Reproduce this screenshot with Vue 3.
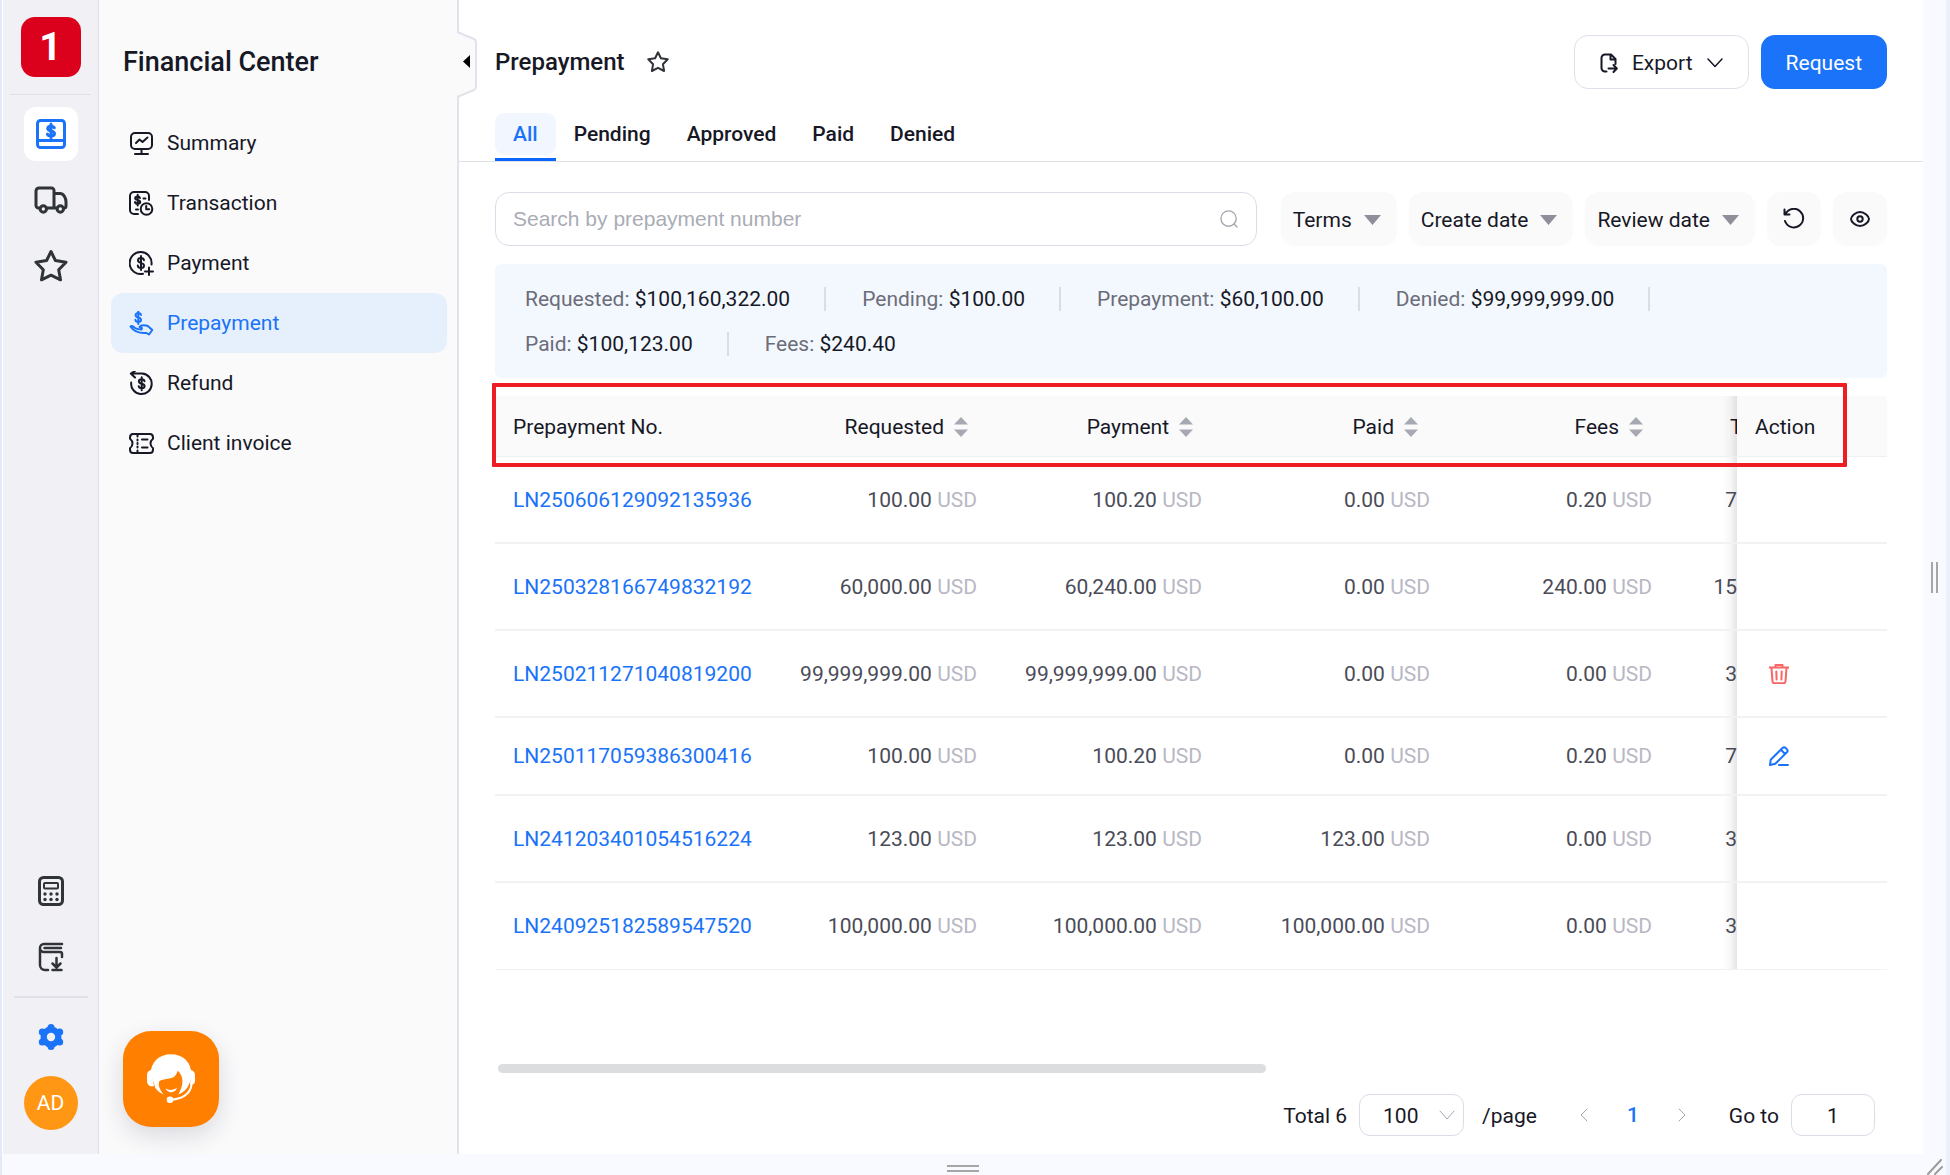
<script setup>
import { ref } from 'vue'

const search = ref('')
const pageSize = ref('100')
const pageInput = ref('1')

const dollar = 'M15 9.2c-.3-1.5-1.500-2.200-3-2.200s-3 .8-3 2.400c0 3.200 6 1.800 6 5.100 0 1.600-1.400 2.500-3 2.500s-3-.8-3.200-2.400M12 5v14'

const menu = [
  {
    label: 'Summary',
    icon: '<rect x="2" y="2" width="21" height="16" rx="4"/><path d="M7 12l3.500-3.500 3 2.500 5-4.500M12.500 18v4M6 23h13"/>'
  },
  {
    label: 'Transaction',
    icon: '<path d="M20 9V5a4 4 0 0 0-4-4H5a4 4 0 0 0-4 4v14a4 4 0 0 0 4 4h4M14.500 7.500h2M7 18.500h2"/><path d="M11 7c-.3-1-1-1.500-2.300-1.500S6.200 6 6.200 7.200c0 2.500 5 1.200 5 3.800 0 1.200-1.200 1.800-2.500 1.800S6.200 12 6 11M8.700 3.800v10.700"/><circle cx="17.500" cy="18" r="5.800"/><path d="M17.200 15v3.300h3"/>'
  },
  {
    label: 'Payment',
    icon: `<path d="M22.500 13.500A11 11 0 1 0 14 22.800M20 16.500v7.500M16 20.500h8"/><path d="${dollar}"/>`
  },
  {
    label: 'Prepayment',
    active: true,
    icon: '<path d="M12 4c-.3-1.300-1.300-1.900-2.700-1.900S6.600 2.800 6.600 4.200c0 2.900 5.400 1.600 5.400 4.500 0 1.400-1.300 2.200-2.700 2.200S6.600 10.200 6.400 8.800M9.300 0v13"/><path d="M1.500 15.500c1.500-1.300 3 0 4.500 1.500 2 1.500 4 1.600 6.500 1.600M12 18.500c2-1.200.5-2.500-1.500-2.500 1-1.800 4-2 8-1.200l4.800 4.200-3.300 4.500-2.500-1.500c-6 .5-12-.5-16-6.500"/>'
  },
  {
    label: 'Refund',
    icon: `<path d="M2 2.500h11a10.300 10.300 0 1 1-10.800 9M6 0L1.800 2.500 6 6.500"/><path d="M15.500 10.200c-.3-1.400-1.400-2-2.800-2s-2.800.7-2.800 2.200c0 3 5.700 1.700 5.700 4.700 0 1.500-1.400 2.300-2.900 2.300s-2.800-.7-3-2.200M12.700 6.300v13"/>`
  },
  {
    label: 'Client invoice',
    icon: '<path d="M4 3h17c2 0 3 1.500 3 3.500v1.300c-1.500 1.200-2.500 2.500-2.500 4.700s1 3.500 2.500 4.700v1.300c0 2-1 3.500-3 3.500H4c-2 0-3-1.500-3-3.500v-1.300c1.500-1.200 2.500-2.500 2.500-4.700S2.500 9 1 7.800V6.500C1 4.500 2 3 4 3zM13 8.500h5.500M13 16.500h5.500M8.500 3v2.500M8.500 8.500v1M8.500 12v1M8.500 15.500v1M8.500 19.500V22"/>'
  }
]

const tabs = ['All', 'Pending', 'Approved', 'Paid', 'Denied']
const filters = ['Terms', 'Create date', 'Review date']

const totals = [
  { label: 'Requested', value: '$100,160,322.00' },
  { label: 'Pending', value: '$100.00' },
  { label: 'Prepayment', value: '$60,100.00' },
  { label: 'Denied', value: '$99,999,999.00' },
  { label: 'Paid', value: '$100,123.00' },
  { label: 'Fees', value: '$240.40' }
]

const columns = ['Requested', 'Payment', 'Paid', 'Fees']

const rows = [
  { no: 'LN250606129092135936', amounts: ['100.00', '100.20', '0.00', '0.20'], terms: '7' },
  { no: 'LN250328166749832192', amounts: ['60,000.00', '60,240.00', '0.00', '240.00'], terms: '15' },
  { no: 'LN250211271040819200', amounts: ['99,999,999.00', '99,999,999.00', '0.00', '0.00'], terms: '3', action: 'delete' },
  { no: 'LN250117059386300416', amounts: ['100.00', '100.20', '0.00', '0.20'], terms: '7', action: 'edit' },
  { no: 'LN241203401054516224', amounts: ['123.00', '123.00', '123.00', '0.00'], terms: '3' },
  { no: 'LN240925182589547520', amounts: ['100,000.00', '100,000.00', '100,000.00', '0.00'], terms: '3' }
]
</script>

<template>
  <div class="window">
    <div class="frame">
      <nav class="rail" aria-label="Workspaces">
        <a class="logo" href="#" aria-label="Home">1</a>
        <div class="rail-line wide"></div>
        <a class="rail-item active" href="#" aria-label="Finance">
          <svg width="30" height="30" viewBox="0 0 30 30">
            <rect x="1.500" y="1.500" width="27" height="27" rx="3" />
            <path d="M2 21.500h26" />
            <path d="M18.300 8.800c-.4-1-1.600-1.600-3.300-1.600s-3.300.7-3.300 2.300c0 3 6.800 1.800 6.800 5 0 1.700-1.700 2.500-3.500 2.500s-3.300-.7-3.600-1.900M15 5v14" />
          </svg>
        </a>
        <a class="rail-item" href="#" aria-label="Shipping">
          <svg width="36" height="36" viewBox="0 0 36 36">
            <path d="M7 26H5.500A2.500 2.500 0 0 1 3 23.500V9a3 3 0 0 1 3-3h12.500A2.500 2.500 0 0 1 21 8.500V26M13.500 26H24M21 11.500h6c2 0 3.500 1 4.500 3 1 1.800 1.500 3 1.500 5V24a2 2 0 0 1-2 2" />
            <circle cx="10.300" cy="27" r="3.200" />
            <circle cx="27.300" cy="27" r="3.200" />
          </svg>
        </a>
        <a class="rail-item" href="#" aria-label="Favorites">
          <svg width="36" height="36" viewBox="0 0 36 36">
            <path d="M18 3.500l4.400 9 10.600 1.700-7.300 7.600 1.800 10-9.500-4.600-9.500 4.600 1.800-10L3 14.200l10.600-1.700z" />
          </svg>
        </a>
        <div class="spacer"></div>
        <a class="rail-item" href="#" aria-label="Calculator">
          <svg width="30" height="30" viewBox="0 0 30 30">
            <rect x="3.500" y="1.500" width="23" height="27" rx="4" />
            <rect x="8" y="7" width="14" height="5.500" rx="1" stroke-width="2" />
            <g class="solid">
              <circle cx="9" cy="18" r="1.700" /><circle cx="15" cy="18" r="1.700" /><circle cx="21" cy="18" r="1.700" />
              <circle cx="9" cy="23.500" r="1.700" /><circle cx="15" cy="23.500" r="1.700" /><circle cx="21" cy="23.500" r="1.700" />
            </g>
          </svg>
        </a>
        <a class="rail-item" href="#" aria-label="Downloads">
          <svg class="medium" width="30" height="30" viewBox="0 0 30 30">
            <path d="M26 2H8a4 4 0 0 0-4 4v17a5 5 0 0 0 5 5h3M4 6a4 4 0 0 0 4 4h16a2 2 0 0 1 2 2v3M8.500 6H25M20.500 16v9M16.500 21.500l4 4 4-4M16.500 28h9" />
          </svg>
        </a>
        <div class="rail-line strong"></div>
        <a class="gear" href="#" aria-label="Settings">
          <svg width="26" height="26" viewBox="0 0 26 26">
            <circle cx="13" cy="13" r="10.500" />
            <circle cx="13" cy="3.500" r="3.500" /><circle cx="13" cy="22.500" r="3.500" />
            <circle cx="4.300" cy="8" r="3.500" /><circle cx="21.700" cy="8" r="3.500" />
            <circle cx="4.300" cy="18" r="3.500" /><circle cx="21.700" cy="18" r="3.500" />
            <circle class="hole" cx="13" cy="13" r="4.200" />
          </svg>
        </a>
        <button class="avatar" type="button">AD</button>
      </nav>

      <aside class="sidebar">
        <h2>Financial Center</h2>
        <ul>
          <li v-for="item in menu" :key="item.label">
            <a href="#" :class="{ active: item.active }">
              <svg width="25" height="25" viewBox="0 0 25 25" v-html="item.icon"></svg>
              {{ item.label }}
            </a>
          </li>
        </ul>
        <button class="collapse" type="button" aria-label="Collapse menu">
          <svg width="20" height="67" viewBox="0 0 20 67">
            <path class="edge" d="M0 1l17 7q2 1 2 3v45q0 2-2 3L0 66" />
            <path class="arrow" d="M13 24v13l-7-6.500z" />
          </svg>
        </button>
        <button class="support" type="button" aria-label="Support">
          <svg width="48" height="50" viewBox="0 0 48 50">
            <path fill="#fff" d="M3.500 20C4 8 12 .3 24 .3S44 8 44.500 20C44 31 38 38.500 31 40.500H17C11 38 7.500 34 7.500 31z" />
            <path fill="#ff8000" d="M12 28c1.500-4 13-2 16-6 1.300-1.700 2.200-3.300 2.700-5.200C34.500 20 36 25 35.300 29.500 34.700 34 33 37.500 30.500 42H18c-3.500-4-7-8.500-6-14z" />
            <path fill="#fff" d="M4 16c-2.500.5-4 2.500-4 5v6c0 4 3 6 7 5zM44 16c2.500.5 4 2.500 4 5v6c0 2.500-2 4-5 4z" />
            <path fill="#fff" d="M18.500 34.500c3.500 2 7.500 2 11.500-.7-1.500 5.700-9 6-11.500.7z" />
            <path fill="none" stroke="#fff" stroke-width="2" d="M44.500 31C43 40 35 45.500 23 45.700" />
            <circle fill="#fff" cx="23" cy="45.700" r="3.300" />
          </svg>
        </button>
      </aside>

      <main class="content">
        <header class="topbar">
          <h1>Prepayment</h1>
          <button class="favorite" type="button" aria-label="Add to favorites">
            <svg width="22" height="22" viewBox="0 0 22 22">
              <path d="M11 1.300l2.900 6L20.700 8.300l-4.800 4.900 1.200 6.800-6.100-3.200L4.900 20l1.200-6.800L1.300 8.300l6.800-1z" />
            </svg>
          </button>
          <div class="spacer"></div>
          <button class="btn outline" type="button">
            <svg width="18" height="20" viewBox="0 0 18 20">
              <path d="M6.500 18.500H5a3.500 3.500 0 0 1-3.500-3.500V5A3.500 3.500 0 0 1 5 1.500h6l4.500 4.500v5M10.500 1.500v5h5M8.500 15.500h8M13.500 12l3.300 3.500-3.300 3.500" />
            </svg>
            <span>Export</span>
            <svg class="thin" width="16" height="10" viewBox="0 0 16 10"><path d="M1 1l7 7.500L15 1" /></svg>
          </button>
          <button class="btn primary" type="button">Request</button>
        </header>

        <nav class="tabs" aria-label="Status">
          <a v-for="(tab, i) in tabs" :key="tab" href="#" :class="{ active: i === 0 }"><span>{{ tab }}</span></a>
        </nav>

        <div class="body">
          <div class="filters">
            <label class="search">
              <input v-model="search" type="text" aria-label="Search" placeholder="Search by prepayment number" />
              <svg width="18" height="18" viewBox="0 0 20 20"><circle cx="9.500" cy="9.500" r="8.500" /><path d="M15.500 15.500l3.500 3.500" /></svg>
            </label>
            <button v-for="f in filters" :key="f" class="filter" type="button">
              {{ f }}
              <svg width="17" height="10" viewBox="0 0 17 10"><path d="M0 0h17L8.500 10z" /></svg>
            </button>
            <button class="tool" type="button" aria-label="Reset">
              <svg width="22" height="22" viewBox="0 0 22 22">
                <path d="M2.500 6A9.300 9.300 0 1 1 2 13M1.500 1.500v5h5" />
              </svg>
            </button>
            <button class="tool" type="button" aria-label="Visible columns">
              <svg width="22" height="22" viewBox="0 0 22 22">
                <path d="M2 11c0-2.500 4.500-7 9-7s9 4.500 9 7-4.500 7-9 7-9-4.500-9-7z" /><circle cx="11" cy="11" r="2.700" />
              </svg>
            </button>
          </div>

          <div class="totals">
            <div v-for="(t, i) in totals" :key="t.label" class="total" :class="{ last: i === totals.length - 1 }">
              <span>{{ t.label }}: <b>{{ t.value }}</b></span>
            </div>
          </div>

          <div class="table-area">
            <table>
              <colgroup>
                <col />
                <col v-for="c in columns" :key="c" class="col-amount" />
                <col class="col-terms" />
                <col class="col-action" />
              </colgroup>
              <thead>
                <tr>
                  <th>Prepayment No.</th>
                  <th v-for="c in columns" :key="c" class="amount">
                    <span class="sort">
                      {{ c }}
                      <svg width="14" height="20" viewBox="0 0 14 20"><path d="M0 7.500L7 0l7 7.500zM0 12.500h14L7 20z" /></svg>
                    </span>
                  </th>
                  <th class="terms">Terms</th>
                  <th>Action</th>
                </tr>
              </thead>
              <tbody>
                <tr v-for="r in rows" :key="r.no" :class="{ compact: r.action === 'edit' }">
                  <td><a href="#">{{ r.no }}</a></td>
                  <td v-for="(a, i) in r.amounts" :key="i" class="amount" :class="{ paid: columns[i] === 'Paid' }">{{ a }} <span class="unit">USD</span></td>
                  <td class="terms">{{ r.terms }}</td>
                  <td class="action">
                    <button v-if="r.action === 'delete'" class="delete" type="button" aria-label="Delete">
                      <svg width="20" height="20" viewBox="0 0 20 20">
                        <path d="M0 3.500h20M6.500 3V1h7v2M2.500 4l1 13.500c.1 1 .8 1.700 1.800 1.700h9.400c1 0 1.700-.7 1.800-1.700L17.500 4M7.300 7.500l.3 8M12.700 7.500l-.3 8" />
                      </svg>
                    </button>
                    <button v-if="r.action === 'edit'" class="edit" type="button" aria-label="Edit">
                      <svg width="20" height="20" viewBox="0 0 20 20">
                        <path d="M1 19l.7-5.200L13.500 2c1.200-1.200 2-1.200 3.200 0l1.100 1.100c1.200 1.200 1.200 2 0 3.200L6.300 17.800zM12 3.800L16 8M10 19h9" />
                      </svg>
                    </button>
                  </td>
                </tr>
              </tbody>
            </table>
            <div class="highlight"></div>
          </div>

          <div class="scrollbar"><div class="thumb"></div></div>

          <footer class="pager">
            <span class="text">Total 6</span>
            <span class="size">
              <select v-model="pageSize" aria-label="Rows per page"><option>100</option></select>
              <svg width="16" height="10" viewBox="0 0 16 10"><path d="M1 1l7 8 7-8" /></svg>
            </span>
            <span class="text per">/page</span>
            <button class="arrow" type="button" aria-label="Previous page">
              <svg width="8" height="14" viewBox="0 0 8 14"><path d="M7 1L1 7l6 6" /></svg>
            </button>
            <button class="current" type="button">1</button>
            <button class="arrow" type="button" aria-label="Next page">
              <svg width="8" height="14" viewBox="0 0 8 14"><path d="M1 1l6 6-6 6" /></svg>
            </button>
            <label class="goto"><span class="text">Go to</span> <input v-model="pageInput" type="text" /></label>
          </footer>
        </div>
      </main>
    </div>

    <div class="grip-right"><i></i></div>
    <div class="grip-bottom"><i></i></div>
    <div class="grip-corner">
      <svg width="16" height="16" viewBox="0 0 16 16"><path d="M1 15L14 1M8 15l7-7" /></svg>
    </div>
  </div>
</template>

<style>
body {
  margin: 0;
}
</style>

<style scoped>
.window {
  box-sizing: border-box;
  min-height: 100vh;
  display: grid;
  grid-template-columns: minmax(0, 1fr) 23px;
  grid-template-rows: 1fr 21px;
  border-left: 2px solid #e3eaf6;
  border-right: 4px solid #eaf1fb;
  background: #f8faff;
  color: #171826;
  font-family: Roboto, sans-serif;
  font-size: 21px;
  line-height: 30px;
}

.window *,
.window *::before,
.window *::after {
  box-sizing: border-box;
}

button,
select,
.pager input {
  font: inherit;
  color: inherit;
}

button {
  border: 0;
  padding: 0;
  background: none;
  cursor: pointer;
}

a {
  color: inherit;
  text-decoration: none;
}

svg {
  display: block;
  flex: none;
  fill: none;
  stroke: currentColor;
  stroke-width: 2;
  stroke-linecap: round;
  stroke-linejoin: round;
}

.spacer {
  flex: 1;
}

.frame {
  display: flex;
  background: #fff;
  border-left: 1px solid #fff;
}

/* Icon rail */
.rail {
  display: flex;
  flex-direction: column;
  align-items: center;
  flex: none;
  width: 96px;
  padding: 17px 0 24px;
  background: #f0f0f5;
  border-right: 1px solid #e0e0ea;
}

.logo {
  width: 60px;
  height: 60px;
  border-radius: 14px;
  background: #db001b;
  color: #fff;
  font-size: 39px;
  font-weight: 700;
  line-height: 60px;
  text-align: center;
}

.rail-line {
  width: 74px;
  height: 1px;
  background: #e0e0e8;
}

.rail-line.wide {
  width: 81px;
  margin: 17px 0 12px;
}

.rail-line.strong {
  height: 2px;
  margin-bottom: 26px;
}

.rail-item {
  display: flex;
  align-items: center;
  justify-content: center;
  width: 54px;
  height: 54px;
  margin-bottom: 12px;
  border-radius: 12px;
  color: #303338;
}

.rail-item svg {
  stroke-width: 3;
}

.rail-item svg.medium {
  stroke-width: 2.5;
}

.rail-item .solid {
  fill: currentColor;
  stroke: none;
}

.rail-item.active {
  background: #fff;
  color: #1a73f8;
}

.gear {
  margin-bottom: 26px;
}

.gear svg {
  fill: #1a73f8;
  stroke: none;
}

.gear .hole {
  fill: #f0f0f5;
}

.avatar {
  width: 54px;
  height: 54px;
  border-radius: 50%;
  background: #ff9614;
  color: #fff;
}

/* Section menu */
.sidebar {
  position: relative;
  flex: none;
  width: 360px;
  padding: 44px 10px 0 12px;
  background: #fafafb;
  border-right: 2px solid #e2e2ec;
}

h1,
h2 {
  margin: 0;
  font-weight: 500;
}

h2 {
  padding-left: 12px;
  font-size: 27px;
  line-height: 36px;
}

.sidebar ul {
  margin: 33px 0 0;
  padding: 0;
  list-style: none;
}

.sidebar li a {
  display: flex;
  align-items: center;
  gap: 13px;
  height: 60px;
  padding-left: 18px;
  border-radius: 12px;
}

.sidebar li a.active {
  background: #e6f0fd;
  color: #1a73f8;
}

.collapse {
  position: absolute;
  top: 31px;
  left: 100%;
  color: #e2e2ec;
}

.collapse .edge {
  fill: #fafafb;
  stroke-width: 2;
}

.collapse .arrow {
  fill: #000;
  stroke: none;
}

.support {
  position: absolute;
  left: 24px;
  bottom: 27px;
  display: flex;
  align-items: center;
  justify-content: center;
  width: 96px;
  height: 96px;
  border-radius: 28px;
  background: #ff8000;
  box-shadow: 0 9px 24px rgba(30, 30, 60, 0.14);
}

.support svg {
  stroke: none;
}

/* Page */
.content {
  flex: 1;
  min-width: 0;
  display: flex;
  flex-direction: column;
}

.topbar {
  display: flex;
  align-items: center;
  padding: 35px 36px 0;
}

h1 {
  font-size: 24px;
}

.favorite {
  margin-left: 22px;
  color: #303338;
}

.btn {
  display: flex;
  align-items: center;
  height: 54px;
  padding: 2px 25px 0;
  border-radius: 14px;
}

.btn.outline {
  gap: 14px;
  border: 1px solid #e0e0ea;
}

.btn .thin {
  stroke-width: 1.5;
}

.btn.primary {
  margin-left: 12px;
  background: #1a73f8;
  color: #fff;
}

.tabs {
  display: flex;
  margin-top: 24px;
  padding: 0 36px;
  border-bottom: 1px solid #dfe0e6;
  font-weight: 500;
}

.tabs a {
  padding-bottom: 3px;
  border-bottom: 3px solid transparent;
}

.tabs span {
  display: block;
  padding: 6px 18px;
  border-radius: 9px;
}

.tabs a.active {
  border-color: #0a66ff;
  color: #1a73f8;
}

.tabs a.active span {
  background: #f2f7ff;
}

.body {
  flex: 1;
  display: flex;
  flex-direction: column;
  padding: 30px 36px 18px;
}

.filters {
  display: flex;
  gap: 12px;
}

.search {
  flex: 1;
  display: flex;
  align-items: center;
  height: 54px;
  margin-right: 12px;
  padding: 0 18px 0 17px;
  border: 1px solid #dcdde8;
  border-radius: 14px;
  color: #a4a7af;
}

.search input {
  flex: 1;
  min-width: 0;
  padding: 0;
  border: 0;
  outline: 0;
  background: none;
  color: #171826;
  font-family: "Liberation Sans", sans-serif;
  font-size: 21px;
}

.search input::placeholder {
  color: #a9acb5;
}

.search svg {
  stroke-width: 1.5;
}

.filter {
  display: flex;
  align-items: center;
  gap: 12px;
  height: 54px;
  padding: 2px 16px 0 12px;
  border-radius: 14px;
  background: #fafafb;
}

.filter svg {
  fill: #8e8f9a;
  stroke: none;
}

.tool {
  display: flex;
  align-items: center;
  justify-content: center;
  width: 54px;
  height: 54px;
  border-radius: 14px;
  background: #fafafb;
}

.totals {
  display: flex;
  flex-wrap: wrap;
  margin-top: 18px;
  padding: 12px 30px;
  border-radius: 6px;
  background: #f3f8ff;
  color: #6c6d78;
}

.total {
  display: flex;
  align-items: center;
  height: 45px;
  padding-right: 36px;
}

.total::after {
  content: "";
  width: 2px;
  height: 24px;
  margin-left: 34px;
  background: #dadce6;
}

.total.last {
  padding-right: 0;
}

.total.last::after {
  content: none;
}

.total b {
  color: #171826;
  font-weight: 400;
}

.table-area {
  position: relative;
  flex: 1;
  margin-top: 18px;
}

table {
  width: 100%;
  table-layout: fixed;
  border-collapse: separate;
  border-spacing: 0;
}

.col-amount {
  width: 225px;
}

.col-terms {
  width: 68px;
}

.col-action {
  width: 150px;
}

th {
  height: 61px;
  padding: 2px 18px 0;
  border-bottom: 1px solid #f0f0f3;
  background: #fafafb;
  font-weight: 400;
  text-align: left;
}

td {
  height: 87px;
  padding: 0 18px;
  border-bottom: 2px solid #f2f2f4;
  color: #4a4b57;
}

tr:last-child td {
  border-bottom-width: 1px;
}

.compact td {
  height: 78px;
}

td a {
  color: #1a73f8;
}

.amount {
  text-align: right;
  white-space: nowrap;
}

td.amount {
  padding-right: 17px;
}

td.amount.paid {
  padding-right: 14px;
}

th.amount {
  padding-right: 26px;
}

.unit {
  color: #b8b8c4;
}

.sort {
  display: inline-flex;
  align-items: center;
  gap: 10px;
}

.sort svg {
  fill: #a6a9b1;
  stroke: none;
}

.terms {
  padding: 0;
  text-align: right;
  background-image: linear-gradient(to left, rgba(0, 0, 0, 0.1), rgba(0, 0, 0, 0.03) 7px, transparent 14px);
}

th.terms {
  padding: 2px 0 0 61px;
  overflow: hidden;
  text-align: left;
}

.action button {
  display: block;
  margin-left: 14px;
}

.delete {
  color: #fa6464;
}

.edit {
  color: #1a73f8;
}

.highlight {
  position: absolute;
  top: -13px;
  left: -3px;
  right: 40px;
  height: 84px;
  border: 4px solid #ee1c25;
  border-radius: 1px;
  pointer-events: none;
}

.scrollbar {
  margin: 24px 3px 21px;
}

.thumb {
  width: 768px;
  max-width: 100%;
  height: 9px;
  border-radius: 5px;
  background: #dcddde;
}

.pager {
  display: flex;
  align-items: center;
  justify-content: flex-end;
  padding-right: 12px;
}

.pager .text {
  padding-top: 2px;
}

.size {
  position: relative;
  margin: 0 18px 0 12px;
}

.size select {
  display: block;
  width: 105px;
  height: 42px;
  padding: 2px 23px 0;
  border: 1px solid #dcdde8;
  border-radius: 11px;
  background: #fff;
  appearance: none;
}

.size svg {
  position: absolute;
  top: 16px;
  right: 9px;
  color: #a4a7af;
  stroke-width: 1;
  pointer-events: none;
}

.arrow {
  color: #a4a7af;
}

.arrow svg {
  stroke-width: 1;
}

.per {
  margin-right: 43px;
}

.pager .current {
  width: 90px;
  color: #1a73f8;
  font-weight: 500;
}

.goto {
  display: flex;
  align-items: center;
  gap: 12px;
  margin-left: 43px;
}

.goto input {
  width: 84px;
  height: 42px;
  padding: 2px 0 0;
  border: 1px solid #dcdde8;
  border-radius: 11px;
  text-align: center;
}

/* Resize grips */
.grip-right,
.grip-bottom,
.grip-corner {
  display: flex;
  align-items: center;
  justify-content: center;
}

.grip-right i {
  width: 7px;
  height: 31px;
  border: solid #a6a6a6;
  border-width: 0 2px;
}

.grip-bottom {
  align-items: flex-end;
  padding-bottom: 3px;
}

.grip-bottom i {
  width: 32px;
  height: 7px;
  border: solid #a6a6a6;
  border-width: 2px 0;
}

.grip-corner {
  align-items: flex-end;
  color: #9c9c9c;
}
</style>
